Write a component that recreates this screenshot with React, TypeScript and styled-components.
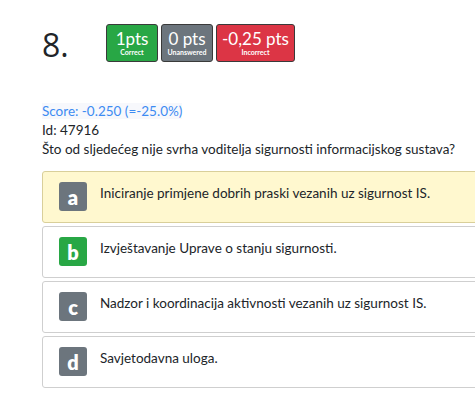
import React from "react";
import styled, { createGlobalStyle } from "styled-components";

const GlobalStyle = createGlobalStyle`
    html, body {
        margin: 0;
        padding: 0;
        background: #fff;
        overflow: hidden;
    }
    body {
        font-family: "Lato", "Open Sans", sans-serif;
        color: #212529;
        width: 475px;
        height: 402px;
    }
`;

const Page = styled.div`
    padding: 24px 0 0 42px;
    width: 520px;
`;

const Header = styled.div`
    display: flex;
    align-items: flex-start;
`;

const Number = styled.div`
    font-family: "Open Sans", sans-serif;
    font-size: 32px;
    line-height: 38px;
    width: 64px;
    margin-top: 2px;
`;

const Badges = styled.div`
    display: flex;
    gap: 3px;
`;

const Badge = styled.div<{ $bg: string }>`
    background: ${(p) => p.$bg};
    color: #fff;
    border: 1px solid #3a3a3a;
    border-radius: 3px;
    height: 36px;
    min-width: 40px;
    padding: 0 5px;
    display: flex;
    flex-direction: column;
    align-items: center;
    justify-content: center;
`;

const BadgeValue = styled.div`
    font-size: 17px;
    line-height: 18px;
`;

const BadgeLabel = styled.div`
    font-size: 7px;
    line-height: 9px;
    font-weight: 700;
`;

const Info = styled.div`
    margin-top: 38px;
    font-size: 13.5px;
    line-height: 19px;
`;

const Score = styled.span`
    color: #3d8bf2;
    background: #f7f8fc;
`;

const Options = styled.div`
    margin-top: 12px;
    display: flex;
    flex-direction: column;
    gap: 3px;
`;

const Option = styled.div<{ $highlight?: boolean }>`
    display: flex;
    align-items: flex-start;
    border: 1px solid ${(p) => (p.$highlight ? "#d9cf9a" : "#cfcfcf")};
    background: ${(p) => (p.$highlight ? "#fff8cf" : "#fff")};
    border-radius: 3px;
    padding: 10px 0 0 16px;
    box-sizing: border-box;
    height: 52px;
`;

const Letter = styled.div<{ $bg: string }>`
    width: 28px;
    height: 29px;
    border-radius: 3px;
    background: ${(p) => p.$bg};
    color: #fff;
    font-weight: 800;
    font-size: 20px;
    display: flex;
    align-items: center;
    justify-content: center;
    flex-shrink: 0;
`;

const OptionText = styled.div`
    margin-left: 13px;
    margin-top: 2px;
    font-size: 13.5px;
    line-height: 18px;
`;

const options = [
    { letter: "a", text: "Iniciranje primjene dobrih praski vezanih uz sigurnost IS.", bg: "#6c757d", highlight: true },
    { letter: "b", text: "Izvještavanje Uprave o stanju sigurnosti.", bg: "#28a745" },
    { letter: "c", text: "Nadzor i koordinacija aktivnosti vezanih uz sigurnost IS.", bg: "#6c757d" },
    { letter: "d", text: "Savjetodavna uloga.", bg: "#6c757d" },
];

const App: React.FC = () => {
    return (
        <>
            <GlobalStyle />
            <Page>
                <Header>
                    <Number>8.</Number>
                    <Badges>
                        <Badge $bg="#28a745">
                            <BadgeValue>1pts</BadgeValue>
                            <BadgeLabel>Correct</BadgeLabel>
                        </Badge>
                        <Badge $bg="#6c757d">
                            <BadgeValue>0 pts</BadgeValue>
                            <BadgeLabel>Unanswered</BadgeLabel>
                        </Badge>
                        <Badge $bg="#dc3545">
                            <BadgeValue>-0,25 pts</BadgeValue>
                            <BadgeLabel>Incorrect</BadgeLabel>
                        </Badge>
                    </Badges>
                </Header>
                <Info>
                    <div>
                        <Score>Score: -0.250 (=-25.0%)</Score>
                    </div>
                    <div>Id: 47916</div>
                    <div>Što od sljedećeg nije svrha voditelja sigurnosti informacijskog sustava?</div>
                </Info>
                <Options>
                    {options.map((o) => (
                        <Option key={o.letter} $highlight={o.highlight}>
                            <Letter $bg={o.bg}>{o.letter}</Letter>
                            <OptionText>{o.text}</OptionText>
                        </Option>
                    ))}
                </Options>
            </Page>
        </>
    );
};

export default App;
